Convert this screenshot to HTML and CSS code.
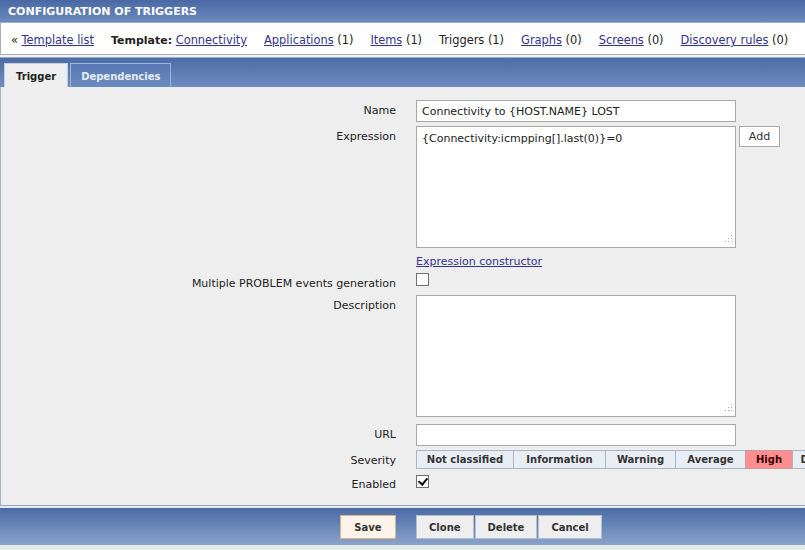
FILE: index.html
```html
<!DOCTYPE html>
<html>
<head>
    <title>Configuration of triggers</title>
    <link rel="stylesheet" href="styles.css">
</head>
<body>
    <div class="title">CONFIGURATION OF TRIGGERS</div>

    <div class="nav">
        <span class="navitem">&laquo; <a href="#">Template list</a></span>
        <span class="navitem"><b>Template:</b> <a href="#">Connectivity</a></span>
        <span class="navitem"><a href="#">Applications</a> (1)</span>
        <span class="navitem"><a href="#">Items</a> (1)</span>
        <span class="navitem">Triggers (1)</span>
        <span class="navitem"><a href="#">Graphs</a> (0)</span>
        <span class="navitem"><a href="#">Screens</a> (0)</span>
        <span class="navitem"><a href="#">Discovery rules</a> (0)</span>
    </div>
    <div class="sep"></div>

    <div class="tabbar">
        <div class="tab active">Trigger</div>
        <div class="tab">Dependencies</div>
    </div>

    <div class="content">
        <div class="row first">
            <div class="label">Name</div>
            <div class="field"><input class="text" type="text" value="Connectivity to {HOST.NAME} LOST"></div>
        </div>

        <div class="row">
            <div class="label">Expression</div>
            <div class="field">
                <div class="areawrap">
                    <textarea class="area">{Connectivity:icmpping[].last(0)}=0</textarea>
                    <svg class="grip" width="10" height="10" viewBox="0 0 10 10">
                        <rect x="8" y="0" width="1" height="1" fill="#aaa"/>
                        <rect x="5" y="3" width="1" height="1" fill="#aaa"/>
                        <rect x="8" y="3" width="1" height="1" fill="#aaa"/>
                        <rect x="2" y="6" width="1" height="1" fill="#aaa"/>
                        <rect x="5" y="6" width="1" height="1" fill="#aaa"/>
                        <rect x="8" y="6" width="1" height="1" fill="#aaa"/>
                    </svg>
                </div>
                <button class="btn add" type="button">Add</button>
            </div>
        </div>

        <div class="row linkrow">
            <div class="label"></div>
            <div class="field"><a href="#">Expression constructor</a></div>
        </div>

        <div class="row chkrow">
            <div class="label">Multiple PROBLEM events generation</div>
            <div class="field"><input class="chk" type="checkbox"></div>
        </div>

        <div class="row desc">
            <div class="label">Description</div>
            <div class="field">
                <div class="areawrap">
                    <textarea class="area"></textarea>
                    <svg class="grip" width="10" height="10" viewBox="0 0 10 10">
                        <rect x="8" y="0" width="1" height="1" fill="#aaa"/>
                        <rect x="5" y="3" width="1" height="1" fill="#aaa"/>
                        <rect x="8" y="3" width="1" height="1" fill="#aaa"/>
                        <rect x="2" y="6" width="1" height="1" fill="#aaa"/>
                        <rect x="5" y="6" width="1" height="1" fill="#aaa"/>
                        <rect x="8" y="6" width="1" height="1" fill="#aaa"/>
                    </svg>
                </div>
            </div>
        </div>

        <div class="row urlrow">
            <div class="label">URL</div>
            <div class="field"><input class="text" type="text" value=""></div>
        </div>

        <div class="row sevrow">
            <div class="label">Severity</div>
            <div class="field severity">
                <span class="sev w-nc">Not classified</span>
                <span class="sev w-info">Information</span>
                <span class="sev w-warn">Warning</span>
                <span class="sev w-avg">Average</span>
                <span class="sev w-high high">High</span>
                <span class="sev w-dis">Disaster</span>
            </div>
        </div>

        <div class="row enabled">
            <div class="label">Enabled</div>
            <div class="field"><input class="chk" type="checkbox" checked></div>
        </div>
    </div>

    <div class="footer">
        <div class="footleft"><button class="btn main" type="button">Save</button></div>
        <div class="footright">
            <button class="btn" type="button">Clone</button>
            <button class="btn" type="button">Delete</button>
            <button class="btn" type="button">Cancel</button>
        </div>
    </div>
</body>
</html>
```

FILE: styles.css
```css
html {
    overflow: hidden;
}
body {
    margin: 0;
    padding: 0;
    font-family: "DejaVu Sans", Verdana, sans-serif;
    font-size: 11px;
    color: #222;
    background: #e6e9e9;
    height: 550px;
}
a {
    color: #33338c;
    text-decoration: underline;
}

/* page title */
.title {
    height: 22px;
    line-height: 23px;
    padding-left: 8px;
    color: #fff;
    font-weight: bold;
    background: linear-gradient(to bottom, #4a69a4, #6a89bd);
    white-space: nowrap;
}

/* navigation strip */
.nav {
    height: 33px;
    box-sizing: border-box;
    padding: 3px 0 0 10px;
    background: #fff;
    border-top: 1px solid #a3adbd;
    border-bottom: 1px solid #a3adbd;
    border-left: 1px solid #a3adbd;
    display: flex;
    align-items: center;
    gap: 17px;
    white-space: nowrap;
    font-size: 11.4px;
}
.nav b {
    font-size: 11px;
}
.sep {
    height: 2px;
    background: #eef0f3;
    border-bottom: 1px solid #9ea9ba;
}

/* tabs */
.tabbar {
    height: 29px;
    background: linear-gradient(to bottom, #4c6ca7, #6f8dbf);
    display: flex;
    align-items: flex-end;
    padding-left: 4px;
    gap: 2px;
}
.tab {
    height: 23px;
    line-height: 25px;
    padding: 0 10px;
    font-size: 10px;
    font-weight: bold;
    color: #e6ecf6;
    border: 1px solid #9fb4da;
    border-bottom: none;
    background: linear-gradient(to bottom, #5677b2, #6c8bbf);
}
.tab.active {
    color: #222;
    background: #eeeeee;
    border-color: #c5cfdf;
    padding: 0 11px;
}

/* form */
.content {
    background: #eeeeee;
    border-left: 1px solid #a2b1c8;
    border-bottom: 1px solid #9aa8bf;
    padding: 13px 0 9px 0;
}
.row {
    display: flex;
    margin-top: 4px;
}
.row.first {
    margin-top: 0;
}
.row.linkrow {
    margin-top: 7px;
}
.row.linkrow .label,
.row.linkrow .field {
    line-height: 13px;
}
.row.chkrow {
    margin-top: 5px;
}
.row.desc {
    margin-top: 0;
}
.row.urlrow {
    margin-top: 7px;
}
.row.sevrow .label {
    line-height: 21px;
}
.row.enabled {
    margin-top: 3px;
}
.label {
    width: 415px;
    flex-shrink: 0;
    padding-right: 20px;
    box-sizing: border-box;
    text-align: right;
    line-height: 22px;
    white-space: nowrap;
}
.field {
    display: flex;
    align-items: flex-start;
}
.text {
    width: 320px;
    height: 22px;
    box-sizing: border-box;
    border: 1px solid #a8a8a8;
    background: #fff;
    padding: 0 5px;
    font-family: inherit;
    font-size: 11px;
    color: #222;
    margin: 0;
    outline: none;
}
.areawrap {
    position: relative;
}
.area {
    display: block;
    width: 320px;
    height: 122px;
    box-sizing: border-box;
    border: 1px solid #a8a8a8;
    background: #fff;
    padding: 5px 5px;
    margin: 0;
    font-family: inherit;
    font-size: 11px;
    line-height: 13px;
    color: #222;
    resize: none;
    outline: none;
}
.grip {
    position: absolute;
    right: 3px;
    bottom: 3px;
}
.chk {
    appearance: none;
    -webkit-appearance: none;
    width: 13px;
    height: 13px;
    margin: 0;
    border: 1px solid #707070;
    background: #fff;
    position: relative;
}
.row.enabled .chk {
    margin-top: 1px;
}
.chk:checked::after {
    content: "";
    position: absolute;
    left: 3px;
    top: 0px;
    width: 4px;
    height: 7px;
    border-right: 2px solid #111;
    border-bottom: 2px solid #111;
    transform: rotate(40deg);
}

/* buttons */
.btn {
    height: 24px;
    margin: 0;
    padding: 0 12px;
    font-family: inherit;
    font-size: 10px;
    font-weight: bold;
    color: #333;
    background: #eeeeee;
    border: 1px solid #b6bfcd;
    cursor: pointer;
}
.btn.add {
    height: 21px;
    width: 41px;
    margin-left: 3px;
    padding: 0;
    font-size: 11px;
    font-weight: normal;
    background: #fff;
    border-color: #a8a8a8;
}
.btn.main {
    width: 56px;
    padding: 0;
    background: #fcf4e8;
    border: 1px solid #e0b47e;
}

/* severity */
.severity {
    white-space: nowrap;
}
.sev {
    flex-shrink: 0;
    box-sizing: border-box;
    height: 19px;
    line-height: 17px;
    text-align: center;
    font-size: 10px;
    font-weight: bold;
    color: #333;
    background: #e9eef4;
    border: 1px solid #aab6c8;
    margin-right: -1px;
}
.w-nc { width: 98px; }
.w-info { width: 93px; }
.w-warn { width: 71px; }
.w-avg { width: 71px; }
.w-high { width: 48px; }
.w-dis { width: 64px; }
.sev.high {
    background: #ff8f8f;
    border-color: #c99a9a;
    color: #3a0000;
}

/* footer */
.footer {
    margin-top: 2px;
    height: 37px;
    box-sizing: border-box;
    padding-top: 7px;
    background: linear-gradient(to bottom, #4b6ba6, #8aa3cb);
    display: flex;
    gap: 20px;
}
.footleft {
    width: 396px;
    display: flex;
    justify-content: flex-end;
}
.footright {
    display: flex;
    gap: 1px;
}
```
